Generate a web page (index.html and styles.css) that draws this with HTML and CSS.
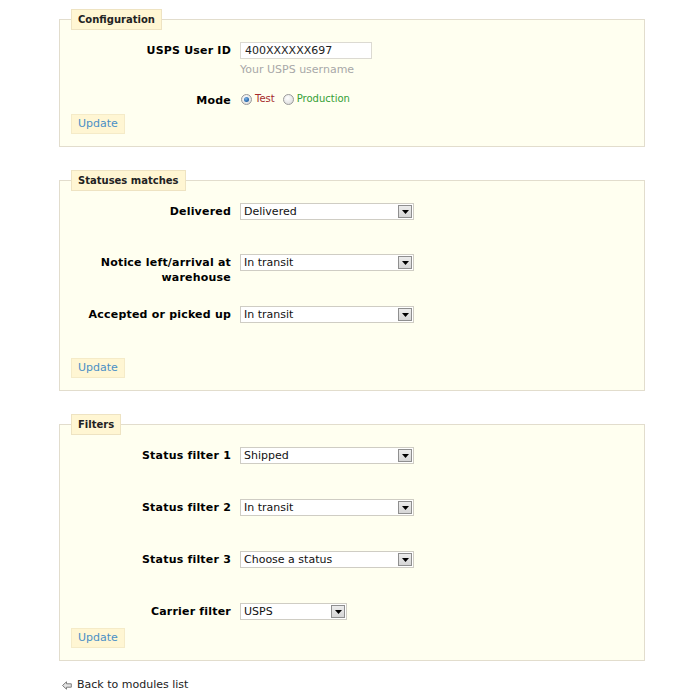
FILE: index.html
```html
<!DOCTYPE html>
<html lang="en">
<head>
<meta charset="utf-8">
<title>USPS module configuration</title>
<link rel="stylesheet" href="styles.css">
</head>
<body>
<div class="page">
  <fieldset class="box box-config">
    <legend class="legend">Configuration</legend>
    <div class="row row-user">
      <label class="lbl" for="uid">USPS User ID</label>
      <div class="field">
        <input class="txt" id="uid" type="text" value="400XXXXXX697">
        <p class="hint">Your USPS username</p>
      </div>
    </div>
    <div class="row row-mode">
      <span class="lbl">Mode</span>
      <div class="field radios">
        <span class="radio radio-on"><span class="dot"></span></span>
        <span class="opt opt-test">Test</span>
        <span class="radio"></span>
        <span class="opt opt-prod">Production</span>
      </div>
    </div>
    <button class="btn btn-config" type="button">Update</button>
  </fieldset>

  <fieldset class="box box-status">
    <legend class="legend">Statuses matches</legend>
    <div class="row srow h51">
      <span class="lbl">Delivered</span>
      <div class="field"><div class="sel"><span class="sel-val">Delivered</span><span class="sel-arrow"><svg width="7" height="4" viewBox="0 0 7 4"><path d="M0 0H7L3.5 4Z" fill="#000"/></svg></span></div></div>
    </div>
    <div class="row srow h52">
      <span class="lbl lbl-2">Notice left/arrival at<br>warehouse</span>
      <div class="field"><div class="sel"><span class="sel-val">In transit</span><span class="sel-arrow"><svg width="7" height="4" viewBox="0 0 7 4"><path d="M0 0H7L3.5 4Z" fill="#000"/></svg></span></div></div>
    </div>
    <div class="row srow h52">
      <span class="lbl">Accepted or picked up</span>
      <div class="field"><div class="sel"><span class="sel-val">In transit</span><span class="sel-arrow"><svg width="7" height="4" viewBox="0 0 7 4"><path d="M0 0H7L3.5 4Z" fill="#000"/></svg></span></div></div>
    </div>
    <button class="btn" type="button">Update</button>
  </fieldset>

  <fieldset class="box box-filters">
    <legend class="legend">Filters</legend>
    <div class="row srow h52">
      <span class="lbl">Status filter 1</span>
      <div class="field"><div class="sel"><span class="sel-val">Shipped</span><span class="sel-arrow"><svg width="7" height="4" viewBox="0 0 7 4"><path d="M0 0H7L3.5 4Z" fill="#000"/></svg></span></div></div>
    </div>
    <div class="row srow h52">
      <span class="lbl">Status filter 2</span>
      <div class="field"><div class="sel"><span class="sel-val">In transit</span><span class="sel-arrow"><svg width="7" height="4" viewBox="0 0 7 4"><path d="M0 0H7L3.5 4Z" fill="#000"/></svg></span></div></div>
    </div>
    <div class="row srow h52">
      <span class="lbl">Status filter 3</span>
      <div class="field"><div class="sel"><span class="sel-val">Choose a status</span><span class="sel-arrow"><svg width="7" height="4" viewBox="0 0 7 4"><path d="M0 0H7L3.5 4Z" fill="#000"/></svg></span></div></div>
    </div>
    <div class="row srow h25">
      <span class="lbl">Carrier filter</span>
      <div class="field"><div class="sel sel-short"><span class="sel-val">USPS</span><span class="sel-arrow"><svg width="7" height="4" viewBox="0 0 7 4"><path d="M0 0H7L3.5 4Z" fill="#000"/></svg></span></div></div>
    </div>
    <button class="btn" type="button">Update</button>
  </fieldset>

  <a class="back" href="#">
    <svg class="back-ico" width="10" height="9" viewBox="0 0 10 9"><path d="M0.5 4.5L4.5 0.8V2.8H9.3V6.2H4.5V8.2Z" fill="#e4e4e4" stroke="#7d7d7d" stroke-width="1" stroke-linejoin="round"/></svg>
    <span>Back to modules list</span>
  </a>
</div>
</body>
</html>
```

FILE: styles.css
```css
html, body {
  margin: 0;
  padding: 0;
  background: #ffffff;
}

body {
  font-family: "DejaVu Sans", Verdana, sans-serif;
  font-size: 11px;
  color: #000;
}

.page {
  padding-left: 59px;
  width: 586px;
  padding-top: 9px;
}

.box {
  margin: 0;
  border: 1px solid #e2ddcd;
  background: #fffff0;
  padding: 12px 11px 12px 11px;
  box-sizing: border-box;
  width: 586px;
  min-width: 0;
}

.box-status,
.box-filters {
  margin-top: 23px;
}

.legend {
  background: #fff6d3;
  border: 1px solid #eee3c2;
  font-weight: bold;
  font-size: 10px;
  line-height: 13px;
  padding: 3px 6px;
  color: #222;
  margin: 0;
}

.row {
  display: grid;
  grid-template-columns: 169px 1fr;
  align-items: start;
}

.lbl {
  font-weight: bold;
  text-align: right;
  padding-right: 9px;
  line-height: 17px;
  color: #000;
  letter-spacing: 0.2px;
}

.lbl-2 {
  line-height: 15px;
  padding-top: 1px;
}

.field {
  min-width: 0;
}

.txt {
  display: block;
  width: 132px;
  height: 17px;
  box-sizing: border-box;
  border: 1px solid #dcdad2;
  background: #fff;
  font-family: "DejaVu Sans", Verdana, sans-serif;
  font-size: 11px;
  color: #222;
  padding: 0 4px;
  margin: 0;
  outline: none;
}

.hint {
  margin: 4px 0 0 0;
  line-height: 14px;
  color: #a8a8a8;
  font-size: 11px;
}

.row-mode {
  margin-top: 15px;
}

.row-mode .lbl {
  line-height: 15px;
  padding-top: 1px;
}

.radios {
  display: flex;
  align-items: center;
  height: 15px;
  padding-left: 1px;
}

.radio {
  width: 11px;
  height: 11px;
  box-sizing: border-box;
  border: 1px solid #9a9a9a;
  border-radius: 50%;
  background: radial-gradient(circle at 40% 35%, #ffffff 0%, #e6e6e6 60%, #cfcfcf 100%);
  display: flex;
  align-items: center;
  justify-content: center;
  flex: none;
}

.radio-on .dot {
  width: 5px;
  height: 5px;
  border-radius: 50%;
  background: radial-gradient(circle at 40% 35%, #7fb4e4 0%, #2a6cb0 60%, #1c4f86 100%);
}

.opt {
  font-size: 10px;
  line-height: 13px;
  margin-left: 3px;
  margin-top: -2px;
}

.opt-test {
  color: #a52a2a;
  margin-right: 8px;
}

.opt-prod {
  color: #35a035;
}

.btn {
  display: block;
  height: 20px;
  box-sizing: border-box;
  margin: 0;
  padding: 0 6px;
  background: #fff6d3;
  border: 1px solid #f5ebc8;
  color: #4a90c6;
  font-family: "DejaVu Sans", Verdana, sans-serif;
  font-size: 11px;
  line-height: 18px;
  cursor: pointer;
}

.btn-config {
  margin-top: 6px;
}

.h51 { height: 51px; }
.h52 { height: 52px; }
.h25 { height: 25px; }

.sel {
  display: flex;
  width: 174px;
  height: 17px;
  box-sizing: border-box;
  border: 1px solid #cfcdc4;
  background: #fff;
}

.sel-short {
  width: 107px;
}

.sel-val {
  flex: 1;
  padding-left: 3px;
  line-height: 15px;
  color: #111;
  white-space: nowrap;
  overflow: hidden;
}

.sel-arrow {
  width: 14px;
  height: 13px;
  margin: 1px;
  box-sizing: border-box;
  border: 1px solid #8f8f8f;
  background: linear-gradient(#ececec, #d6d6d6);
  display: flex;
  align-items: center;
  justify-content: center;
  flex: none;
}

.back {
  display: flex;
  align-items: center;
  margin-top: 17px;
  margin-left: 3px;
  line-height: 14px;
  color: #222;
  text-decoration: none;
}

.back-ico {
  margin-right: 5px;
  flex: none;
}
```
